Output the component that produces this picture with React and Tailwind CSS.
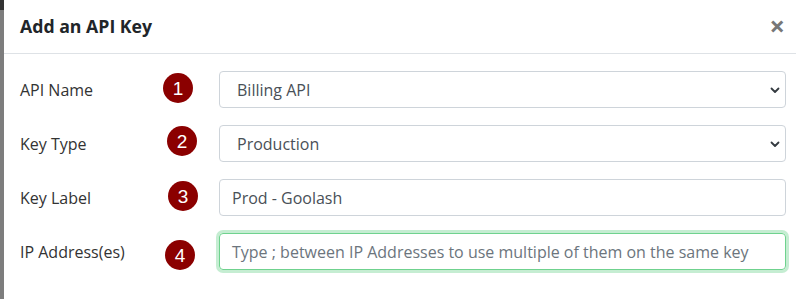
import React from "react";

const font = { fontFamily: '"Open Sans", "Noto Sans", sans-serif' };

function Badge({ n, left, top }) {
  return (
    <span
      className="absolute flex h-[30px] w-[30px] items-center justify-center rounded-full bg-[#8b0000] text-[19px] leading-none text-white"
      style={{ left, top, fontFamily: '"Liberation Sans", Arial, sans-serif' }}
    >
      {n}
    </span>
  );
}

function Chevron() {
  return (
    <svg className="pointer-events-none absolute right-[6px] top-1/2 -translate-y-1/2" width="10" height="8" viewBox="0 0 10 8">
      <path d="M1.5 2.5 L5 6 L8.5 2.5" fill="none" stroke="#343a40" strokeWidth="1.8" strokeLinecap="round" strokeLinejoin="round" />
    </svg>
  );
}

function Row({ label, badge, children }) {
  return (
    <div className="flex h-[37px] items-center">
      <div className="relative flex h-full w-[199px] shrink-0 items-center text-[16px] text-[#333]">
        {label}
        {badge}
      </div>
      <div className="relative h-full flex-1">{children}</div>
    </div>
  );
}

export default function App() {
  return (
    <div className="flex h-[299px] w-[796px] overflow-hidden bg-white" style={font}>
      <div className="flex w-[4px] shrink-0 flex-col bg-[#7d7d7d]">
        <div className="h-[10px] bg-[#333]" />
      </div>
      <div className="flex flex-1 flex-col">
        <div className="flex h-[54px] items-center justify-between border-b border-[#dee2e6] pl-[16px] pr-[11px]">
          <h5 className="text-[17.7px] font-bold text-[#212529]">Add an API Key</h5>
          <span className="mb-[2px] text-[27px] font-bold leading-none text-[#777]">×</span>
        </div>
        <div className="flex flex-col gap-[17px] pl-[16px] pr-[10px] pt-[17px]">
          <Row label="API Name" badge={<Badge n="1" left={143} top={2} />}>
            <div className="flex h-full items-center rounded-[4px] border border-[#ced4da] pl-[17px] text-[16px] text-[#495057]">
              Billing API
            </div>
            <Chevron />
          </Row>
          <Row label="Key Type" badge={<Badge n="2" left={147} top={1} />}>
            <div className="flex h-full items-center rounded-[4px] border border-[#ced4da] pl-[17px] text-[16px] text-[#495057]">
              Production
            </div>
            <Chevron />
          </Row>
          <Row label="Key Label" badge={<Badge n="3" left={148} top={2} />}>
            <div className="flex h-full items-center rounded-[4px] border border-[#ced4da] pl-[12px] text-[16px] text-[#495057]">
              Prod - Goolash
            </div>
          </Row>
          <Row label="IP Address(es)" badge={<Badge n="4" left={145} top={7} />}>
            <div className="flex h-full items-center rounded-[4px] border border-[#6fd28e] pl-[12px] text-[16px] text-[#6c757d] shadow-[0_0_0_3px_rgba(111,210,142,0.4)]">
              Type ; between IP Addresses to use multiple of them on the same key
            </div>
          </Row>
        </div>
      </div>
    </div>
  );
}
